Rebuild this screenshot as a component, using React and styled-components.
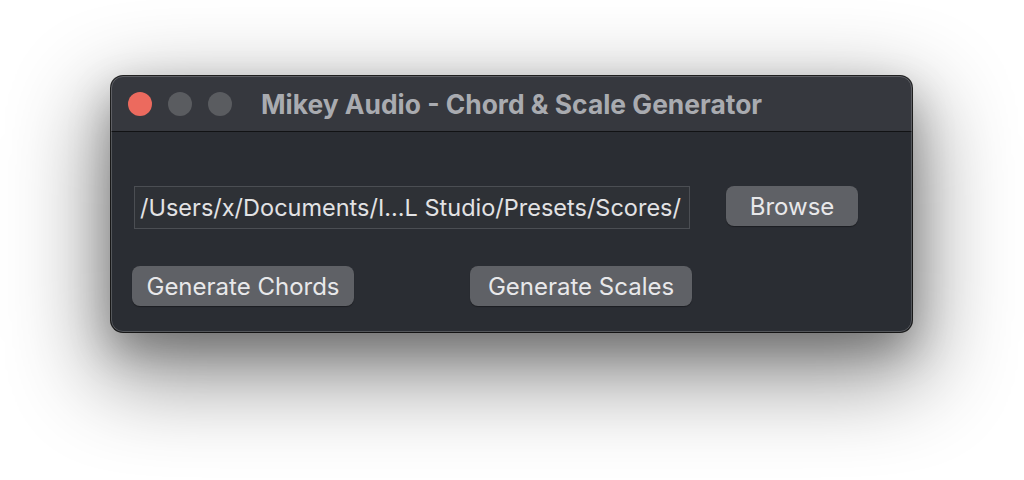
import React from "react";
import styled, { createGlobalStyle } from "styled-components";

const Global = createGlobalStyle`
  html, body { margin: 0; padding: 0; background: #ffffff; }
  body { font-family: Inter, "Noto Sans", "Liberation Sans", sans-serif; }
  * { box-sizing: border-box; }
`;

const Page = styled.div`
  width: 1024px;
  height: 480px;
  padding: 76px 0 0 111px;
  display: flex;
  align-items: flex-start;
  overflow: hidden;
`;

const Window = styled.div`
  position: relative;
  width: 801px;
  height: 256px;
  border-radius: 12px;
  background: #2a2d33;
  overflow: hidden;
  box-shadow: 0 0 0 1px rgba(0, 0, 0, 0.85), 0 18px 40px 0 rgba(0, 0, 0, 0.25),
    0 34px 90px 12px rgba(0, 0, 0, 0.45);
  display: flex;
  flex-direction: column;
  &::after {
    content: "";
    position: absolute;
    inset: 0;
    border-radius: 12px;
    border: 1px solid rgba(255, 255, 255, 0.2);
    pointer-events: none;
  }
`;

const TitleBar = styled.div`
  height: 56px;
  flex: none;
  background: #36383e;
  border-bottom: 1px solid #111214;
  display: grid;
  grid-template-columns: 1fr auto 1fr;
  align-items: center;
  padding: 0 17px;
`;

const Lights = styled.div`
  display: flex;
  gap: 16px;
  align-items: center;
`;

const Light = styled.span`
  width: 24px;
  height: 24px;
  border-radius: 50%;
  background: ${(p) => p.$color};
`;

const Title = styled.div`
  font-size: 26.4px;
  font-weight: 700;
  color: #a9abb0;
  white-space: nowrap;
  padding-top: 1px;
`;

const Body = styled.div`
  flex: 1;
  display: flex;
  flex-direction: column;
  padding: 54px 0 0 21px;
`;

const Row = styled.div`
  display: flex;
  align-items: flex-start;
  margin-top: ${(p) => p.$top || 0}px;
`;

const PathField = styled.div`
  margin-left: 2px;
  width: 556px;
  height: 43px;
  background: #2e3136;
  border: 1px solid #4b4e53;
  color: #e2e2e4;
  font-size: 23.5px;
  display: flex;
  align-items: center;
  padding-left: 5px;
  white-space: nowrap;
  overflow: hidden;
`;

const Button = styled.div`
  width: ${(p) => p.$w}px;
  height: 40px;
  margin-left: ${(p) => p.$ml || 0}px;
  border-radius: 8px;
  background: #5f6166;
  color: #e8e8ea;
  font-size: 24px;
  display: flex;
  align-items: center;
  justify-content: center;
  white-space: nowrap;
  box-shadow: 0 1px 1px rgba(0, 0, 0, 0.35);
`;

export default function App() {
  return (
    <>
      <Global />
      <Page>
        <Window>
          <TitleBar>
            <Lights>
              <Light $color="#ec6a5e" />
              <Light $color="#5a5c60" />
              <Light $color="#5a5c60" />
            </Lights>
            <Title>Mikey Audio - Chord &amp; Scale Generator</Title>
            <span />
          </TitleBar>
          <Body>
            <Row>
              <PathField>/Users/x/Documents/I...L Studio/Presets/Scores/</PathField>
              <Button $w={132} $ml={36}>Browse</Button>
            </Row>
            <Row $top={37}>
              <Button $w={222}>Generate Chords</Button>
              <Button $w={222} $ml={116}>Generate Scales</Button>
            </Row>
          </Body>
        </Window>
      </Page>
    </>
  );
}
